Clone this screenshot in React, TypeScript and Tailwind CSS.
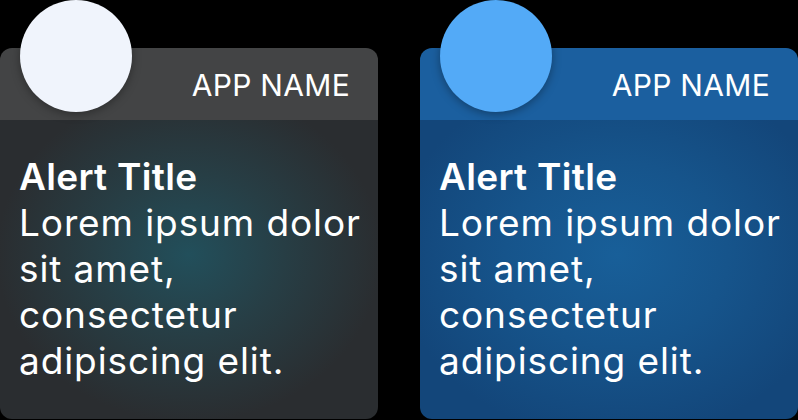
const font = { fontFamily: 'Inter, "Noto Sans", sans-serif' };

type Variant = 'dark' | 'blue';

function AlertCard({ variant }: { variant: Variant }) {
  const dark = variant === 'dark';
  return (
    <div className="relative w-[378px] pt-[48px]">
      <div
        className={
          'absolute left-[20px] top-0 w-[112px] h-[112px] rounded-full shadow-[0_2px_10px_rgba(0,0,0,0.35)] ' +
          (dark ? 'bg-[#f0f4fc]' : 'bg-[#53aaf7]')
        }
      />
      <div className="rounded-[12px] overflow-hidden h-[371px] flex flex-col">
        <div
          className={
            'h-[72px] flex items-center justify-end pr-[28px] ' +
            (dark ? 'bg-[#434445]' : 'bg-[#1b5f9f]')
          }
        >
          <span className="text-white text-[30px] tracking-[0.3px] pt-[2px]">APP NAME</span>
        </div>
        <div
          className={
            'flex-1 pl-[19px] pr-[10px] pt-[34px] text-white ' +
            (dark
              ? 'bg-[radial-gradient(ellipse_at_50%_45%,#224f5b_0%,#273e45_35%,#2a2d30_72%)]'
              : 'bg-[radial-gradient(ellipse_at_52%_45%,#185f99_0%,#16548b_40%,#13467a_80%)]')
          }
        >
          <div className="text-[37px] leading-[46px] font-semibold tracking-[0.3px]">Alert Title</div>
          <div className="text-[37px] leading-[46px] tracking-[0.9px]">
            Lorem ipsum dolor sit amet, consectetur adipiscing elit.
          </div>
        </div>
      </div>
    </div>
  );
}

export default function App() {
  return (
    <div className="w-[798px] h-[420px] bg-black flex gap-[42px] overflow-hidden" style={font}>
      <AlertCard variant="dark" />
      <AlertCard variant="blue" />
    </div>
  );
}
